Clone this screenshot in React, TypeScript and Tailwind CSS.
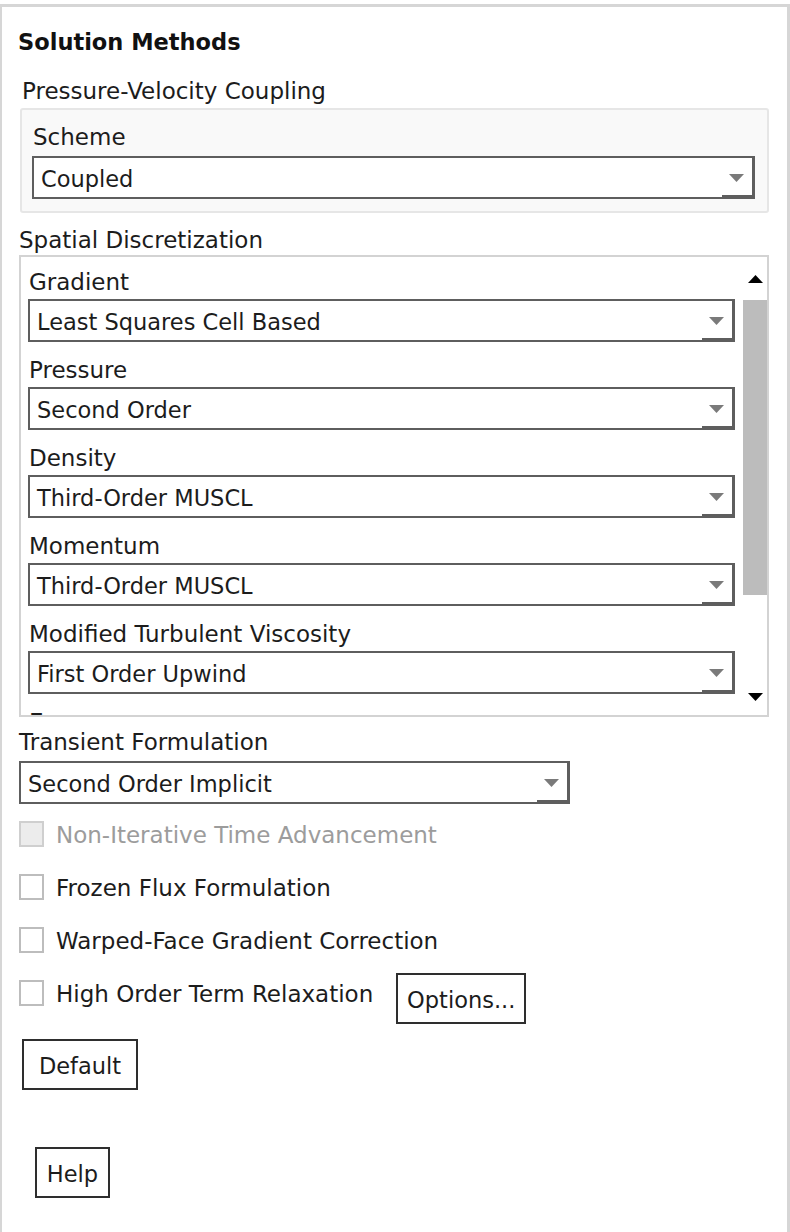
import React from "react";

const font = { fontFamily: '"DejaVu Sans", "Noto Sans", sans-serif' };

function Select({ value, className = "" }: { value: string; className?: string }) {
  return (
    <div
      className={`relative h-[43px] bg-white border-t-2 border-l-2 border-b-2 border-r-[3px] border-[#5e5e5e] flex items-center pl-[7px] ${className}`}
    >
      <span className="text-[#1c1c1c] text-[22.5px] leading-none pt-[3px]">{value}</span>
      <svg className="absolute right-[8px] top-[16px]" width="15" height="9" viewBox="0 0 15 9">
        <polygon points="0,0 15,0 7.5,8" fill="#7a7a7a" />
      </svg>
      <div className="absolute right-[-3px] bottom-[-2px] w-[33px] h-[4px] bg-[#5e5e5e]" />
    </div>
  );
}

function Label({ text, className = "" }: { text: string; className?: string }) {
  return (
    <div className={`h-[30px] flex items-center text-[23px] text-[#1c1c1c] leading-[30px] whitespace-nowrap ${className}`}>
      {text}
    </div>
  );
}

function Check({ text, disabled = false }: { text: string; disabled?: boolean }) {
  return (
    <div className="h-[53px] flex items-center">
      <div
        className={`w-[25px] h-[26px] border-2 shrink-0 ${
          disabled ? "border-[#cfcfcf] bg-[#ececec]" : "border-[#bdbdbd] bg-white"
        }`}
      />
      <span
        className={`ml-[12px] text-[23px] leading-none pt-[3px] whitespace-nowrap ${disabled ? "text-[#9c9c9c]" : "text-[#1c1c1c]"}`}
      >
        {text}
      </span>
    </div>
  );
}

function Button({ text, className = "" }: { text: string; className?: string }) {
  return (
    <div
      className={`h-[51px] border-2 border-[#2e2e2e] bg-white flex items-center justify-center text-[22.5px] text-[#1c1c1c] leading-none pt-[3px] ${className}`}
    >
      {text}
    </div>
  );
}

export default function App() {
  const fields: [string, string][] = [
    ["Gradient", "Least Squares Cell Based"],
    ["Pressure", "Second Order"],
    ["Density", "Third-Order MUSCL"],
    ["Momentum", "Third-Order MUSCL"],
    ["Modified Turbulent Viscosity", "First Order Upwind"],
    ["Energy", "Second Order Upwind"],
  ];
  return (
    <div className="w-[790px] h-[1232px] bg-white overflow-hidden" style={font}>
      <div className="h-[4px] bg-white" />
      <div className="h-[1228px] border-t-[3px] border-l-[2px] border-r-[3px] border-[#d6d6d6]">
        <div className="pl-[16px] pt-[20px]">
          <div className="h-[30px] flex items-center text-[22.5px] font-bold text-[#111] leading-none">
            Solution Methods
          </div>
        </div>
        <div className="pl-[20px] mt-[19px]">
          <Label text="Pressure-Velocity Coupling" />
        </div>
        <div className="ml-[18px] mt-[2px] w-[749px] h-[105px] bg-[#f9f9f9] border-2 border-[#e6e6e6] rounded-[3px] pl-[10px] pr-[12px] pt-[12px]">
          <Label text="Scheme" className="pl-[1px]" />
          <Select value="Coupled" className="mt-[4px]" />
        </div>
        <div className="pl-[17px] mt-[12px]">
          <Label text="Spatial Discretization" />
        </div>
        <div className="ml-[17px] w-[750px] h-[462px] border-2 border-[#d3d3d3] flex overflow-hidden">
          <div className="flex-1 pl-[7px] pt-[9px] overflow-hidden">
            {fields.map(([l, v]) => (
              <div key={l} className="w-[707px]">
                <Label text={l} className="pl-[1px] h-[32px]" />
                <Select value={v} className="mt-[1px] mb-[12px]" />
              </div>
            ))}
          </div>
          <div className="w-[24px] flex flex-col items-center">
            <div className="h-[43px] w-full flex items-center justify-center">
              <svg width="15" height="8" viewBox="0 0 15 8">
                <polygon points="7.5,0 15,8 0,8" fill="#000" />
              </svg>
            </div>
            <div className="w-full h-[295px] bg-[#bcbcbc]" />
            <div className="flex-1 w-full flex items-end justify-center pb-[14px]">
              <svg width="15" height="8" viewBox="0 0 15 8">
                <polygon points="0,0 15,0 7.5,8" fill="#000" />
              </svg>
            </div>
          </div>
        </div>
        <div className="pl-[17px] mt-[10px]">
          <Label text="Transient Formulation" />
          <Select value="Second Order Implicit" className="w-[551px] mt-[4px]" />
        </div>
        <div className="pl-[17px] mt-[3px]">
          <Check text="Non-Iterative Time Advancement" disabled />
          <Check text="Frozen Flux Formulation" />
          <Check text="Warped-Face Gradient Correction" />
          <div className="flex items-start">
            <Check text="High Order Term Relaxation" />
            <Button text="Options..." className="w-[130px] ml-[23px] mt-[7px]" />
          </div>
        </div>
        <div className="pl-[20px] mt-[15px]">
          <Button text="Default" className="w-[116px]" />
        </div>
        <div className="pl-[33px] mt-[57px]">
          <Button text="Help" className="w-[75px]" />
        </div>
      </div>
    </div>
  );
}
